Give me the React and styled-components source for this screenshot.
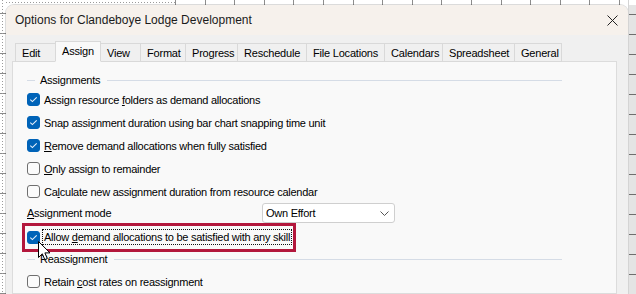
import styled, { createGlobalStyle } from "styled-components";

const GlobalStyle = createGlobalStyle`
  html, body {
    margin: 0;
    padding: 0;
    background: #fff;
  }
  body {
    font-family: "Liberation Sans", Arial, sans-serif;
    color: #000;
  }
`;

const tabs = [
  { label: "Edit", width: 40 },
  { label: "Assign", width: 45, active: true },
  { label: "View", width: 40 },
  { label: "Format", width: 45 },
  { label: "Progress", width: 52 },
  { label: "Reschedule", width: 69 },
  { label: "File Locations", width: 78 },
  { label: "Calendars", width: 58 },
  { label: "Spreadsheet", width: 72 },
  { label: "General", width: 47 },
];

const Desktop = styled.div`
  position: relative;
  display: flex;
  width: 636px;
  height: 294px;
  overflow: hidden;
  background: #fff;
`;

const LeftGutter = styled.div`
  width: 6px;
  flex-shrink: 0;
  background:
    repeating-linear-gradient(180deg, #9a9a9a 0 1px, transparent 1px 3px) 2px 0 / 1px 100% no-repeat,
    repeating-linear-gradient(180deg, transparent 0 13px, #8a8a8a 13px 14px, transparent 14px 20px),
    #fff;
`;

const RightGutter = styled.div`
  width: 7px;
  flex-shrink: 0;
  border-left: 1px solid #d4d4d4;
  background:
    linear-gradient(#fff, #fff) 0 0 / 100% 5px no-repeat,
    repeating-linear-gradient(180deg, transparent 0 14px, #6e6e6e 14px 15px, transparent 15px 20px),
    #e4e4e4;
`;

const Main = styled.div`
  flex: 1;
  display: flex;
  flex-direction: column;
  min-width: 0;
`;

const TopStrip = styled.div`
  height: 5px;
  flex-shrink: 0;
  background:
    repeating-linear-gradient(90deg, #9a9a9a 0 1px, transparent 1px 3px) 0 2px / 169px 1px no-repeat,
    linear-gradient(90deg, #fff 169px, transparent 169px),
    repeating-linear-gradient(90deg, #8c8c8c 0 1px, transparent 1px 29.6px) 169px 0,
    #fff;
`;

const Dialog = styled.div`
  flex: 1;
  display: flex;
  flex-direction: column;
  background: #f0f0f0;
  border-radius: 8px 8px 0 0;
  box-shadow: 0 0 0 1px rgba(0, 0, 0, 0.14);
`;

const TitleBar = styled.div`
  height: 30px;
  flex-shrink: 0;
  display: flex;
  align-items: center;
  justify-content: space-between;
  padding-left: 9px;
  background: #f6f1ec;
  border-radius: 8px 8px 0 0;
`;

const Title = styled.span`
  font-size: 12px;
  color: #1a1a1a;
`;

const CloseIcon = styled.svg`
  width: 11px;
  height: 11px;
  margin-right: 10px;
`;

const Body = styled.div`
  flex: 1;
  display: flex;
  flex-direction: column;
  padding: 7px 11px 0 6px;
`;

const TabStrip = styled.div`
  display: flex;
  align-items: flex-end;
  height: 20px;
  margin: 0 0 -1px 3px;
  position: relative;
  z-index: 1;
`;

const Tab = styled.div`
  box-sizing: border-box;
  width: ${(p) => p.$width + 1}px;
  height: ${(p) => (p.$active ? 21 : 19)}px;
  margin-left: -1px;
  padding: 0 0 ${(p) => (p.$active ? 1 : 0)}px 6px;
  display: flex;
  align-items: center;
  font-size: 11px;
  letter-spacing: -0.2px;
  white-space: nowrap;
  border: 1px solid #d9d9d9;
  border-bottom-color: ${(p) => (p.$active ? "#f9f9f9" : "#d9d9d9")};
  background: ${(p) => (p.$active ? "#f9f9f9" : "#f0f0f0")};
  position: relative;
  z-index: ${(p) => (p.$active ? 2 : 1)};
  &:first-child {
    margin-left: 0;
  }
`;

const Panel = styled.div`
  flex: 1;
  display: flex;
  flex-direction: column;
  align-items: flex-start;
  padding: 10px 54px 0 14px;
  background: #f9f9f9;
  border: 1px solid #dcdcdc;
  font-size: 11px;
  letter-spacing: -0.25px;
`;

const GroupHeader = styled.div`
  align-self: stretch;
  display: flex;
  align-items: center;
  height: 16px;
  &::before,
  &::after {
    content: "";
    height: 1px;
    background: #d5dce6;
  }
  &::before {
    width: 8px;
    margin-right: 5px;
  }
  &::after {
    flex: 1;
    margin-left: 7px;
  }
`;

const Row = styled.div`
  position: relative;
  display: flex;
  align-items: center;
  height: ${(p) => p.$height || 23}px;
  margin-top: ${(p) => p.$top || 0}px;
`;

const Highlight = styled(Row)`
  &::after {
    content: "";
    position: absolute;
    top: 0;
    bottom: -1px;
    left: -5px;
    right: -5px;
    border: 3px solid #b3173c;
    pointer-events: none;
  }
`;

const Box = styled.span`
  box-sizing: border-box;
  width: 13px;
  height: 13px;
  flex-shrink: 0;
  margin-right: 3px;
  border-radius: 3px;
  display: flex;
  align-items: center;
  justify-content: center;
  background: ${(p) => (p.$checked ? "#0063b8" : "#fbfbfb")};
  border: 1px solid ${(p) => (p.$checked ? "#0063b8" : "#6f6f6f")};
`;

const Text = styled.span`
  white-space: nowrap;
  padding: 1px 1px;
  outline: ${(p) => (p.$focus ? "1px dotted #111" : "none")};
`;

const Key = styled.span`
  text-decoration: underline;
  text-underline-offset: 1px;
`;

const FieldLabel = styled.span`
  width: 235px;
  white-space: nowrap;
`;

const Select = styled.div`
  box-sizing: border-box;
  width: 133px;
  height: 20px;
  display: flex;
  align-items: center;
  justify-content: space-between;
  padding: 0 5px 0 3px;
  background: #fff;
  border: 1px solid #cfcfcf;
  border-radius: 3px;
`;

const Cursor = styled.svg`
  position: absolute;
  left: 38px;
  top: 241px;
  width: 13px;
  height: 20px;
  z-index: 5;
`;

const Check = ({ checked }) => (
  <Box $checked={checked}>
    {checked && (
      <svg width="9" height="9" viewBox="0 0 9 9">
        <path d="M1.3 4.6 L3.4 6.6 L7.7 2.3" fill="none" stroke="#e8f1fb" strokeWidth="1.1" />
      </svg>
    )}
  </Box>
);

const CheckRow = ({ checked, children, top }) => (
  <Row $top={top}>
    <Check checked={checked} />
    <Text>{children}</Text>
  </Row>
);

export default function App() {
  return (
    <>
      <GlobalStyle />
      <Desktop>
        <LeftGutter />
        <Main>
          <TopStrip />
          <Dialog>
            <TitleBar>
              <Title>Options for Clandeboye Lodge Development</Title>
              <CloseIcon viewBox="0 0 11 11">
                <path d="M0.5 0.5 L10.5 10.5 M10.5 0.5 L0.5 10.5" stroke="#222" strokeWidth="1" />
              </CloseIcon>
            </TitleBar>
            <Body>
              <TabStrip>
                {tabs.map((t) => (
                  <Tab key={t.label} $width={t.width} $active={t.active}>
                    {t.label}
                  </Tab>
                ))}
              </TabStrip>
              <Panel>
                <GroupHeader>Assignments</GroupHeader>
                <CheckRow checked>
                  Assign resource <Key>f</Key>olders as demand allocations
                </CheckRow>
                <CheckRow checked>Snap assignment duration using bar chart snapping time unit</CheckRow>
                <CheckRow checked>
                  <Key>R</Key>emove demand allocations when fully satisfied
                </CheckRow>
                <CheckRow>
                  <Key>O</Key>nly assign to remainder
                </CheckRow>
                <CheckRow>
                  Ca<Key>l</Key>culate new assignment duration from resource calendar
                </CheckRow>
                <Row $height={20}>
                  <FieldLabel>
                    <Key>A</Key>ssignment mode
                  </FieldLabel>
                  <Select>
                    <span>Own Effort</span>
                    <svg width="9" height="5" viewBox="0 0 9 5">
                      <path d="M0.5 0.5 L4.5 4.5 L8.5 0.5" fill="none" stroke="#555" strokeWidth="1" />
                    </svg>
                  </Select>
                </Row>
                <Highlight $height={28}>
                  <Check checked />
                  <Text $focus>
                    Allow <Key>d</Key>emand allocations to be satisfied with any skill
                  </Text>
                </Highlight>
                <GroupHeader>Reassignment</GroupHeader>
                <CheckRow top={3}>
                  Retain <Key>c</Key>ost rates on reassignment
                </CheckRow>
              </Panel>
            </Body>
          </Dialog>
        </Main>
        <RightGutter />
        <Cursor viewBox="0 0 13 20">
          <path
            d="M0.5 0.5 L0.5 16.5 L4.3 12.8 L6.8 18.6 L9.3 17.6 L6.9 11.9 L12 11.9 Z"
            fill="#fff"
            stroke="#000"
            strokeWidth="1"
            strokeLinejoin="miter"
          />
        </Cursor>
      </Desktop>
    </>
  );
}
